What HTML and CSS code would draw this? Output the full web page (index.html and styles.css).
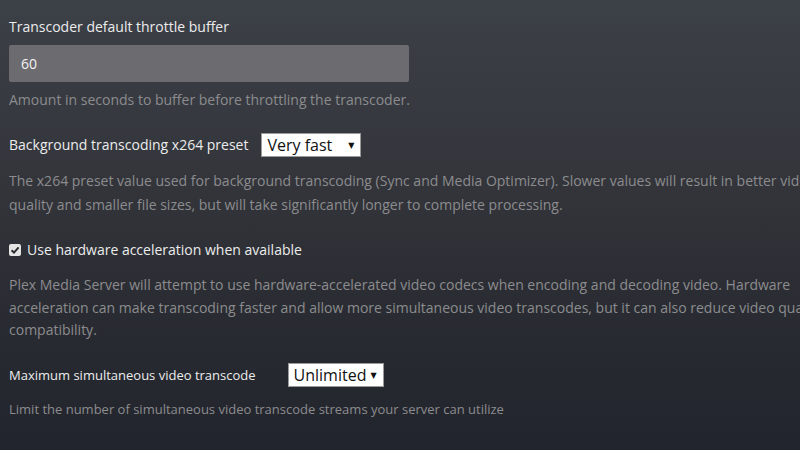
FILE: index.html
```html
<!DOCTYPE html>
<html lang="en">
<head>
    <meta charset="UTF-8">
    <meta name="viewport" content="width=device-width, initial-scale=1.0">
    <title>Transcoder Settings</title>
    <link rel="stylesheet" href="styles.css">
</head>
<body>

    <div id="settings">
        <div class="setting first">
            <label class="label" for="throttle-buffer">Transcoder default throttle buffer</label>
            <input id="throttle-buffer" class="text-input" type="text" value="60">
            <p class="help help-tight">Amount in seconds to buffer before throttling the transcoder.</p>
        </div>

        <div class="setting">
            <div class="row">
                <span class="label">Background transcoding x264 preset</span>
                <span class="select-box preset">Very fast</span>
            </div>
            <p class="help">The x264 preset value used for background transcoding (Sync and Media Optimizer). Slower values will result in better video quality and smaller file sizes, but will take significantly longer to complete processing.</p>
        </div>

        <div class="setting">
            <div class="row">
                <span class="check">
                    <svg width="12" height="12" viewBox="0 0 12 12">
                        <rect x="0" y="0" width="12" height="12" rx="2" fill="#e4e4e4"/>
                        <path d="M2.6 6.2 L5 8.6 L9.6 3.4" stroke="#2b2b2f" stroke-width="2" fill="none"/>
                    </svg>
                </span>
                <span class="label">Use hardware acceleration when available</span>
            </div>
            <p class="help help-wide">Plex Media Server will attempt to use hardware-accelerated video codecs when encoding and decoding video. Hardware acceleration can make transcoding faster and allow more simultaneous video transcodes, but it can also reduce video quality and compatibility.</p>
        </div>

        <div class="setting small">
            <div class="row">
                <span class="label">Maximum simultaneous video transcode</span>
                <span class="select-box limit">Unlimited</span>
            </div>
            <p class="help">Limit the number of simultaneous video transcode streams your server can utilize</p>
        </div>
    </div>

</body>
</html>
```

FILE: styles.css
```css
html, body { height: 100%; }
body {
    margin: 0;
    overflow: hidden;
    font-family: "Open Sans", "DejaVu Sans", sans-serif;
    background: linear-gradient(180deg, #3c4047 0%, #33353b 40%, #282a31 75%, #22252d 100%);
    color: #e8e8e8;
}
#settings { width: 848px; padding: 17px 0 0 9px; }
.setting { margin-bottom: 21px; }
.label { display: block; font-size: 14px; line-height: 20px; color: #ececec; }
.row { display: flex; align-items: center; height: 24px; }
.row .label { margin-right: 13px; }
.text-input {
    display: block;
    box-sizing: border-box;
    width: 400px;
    height: 37px;
    margin-top: 8px;
    padding: 0 12px;
    border: none;
    border-radius: 2px;
    background: #6b6b70;
    color: #f4f4f4;
    font-family: inherit;
    font-size: 14px;
}
.help { margin: 12px 0 0; font-size: 14px; line-height: 24px; color: #8c8c8e; }
.help-tight { margin-top: 6px; }
.help-wide { margin-top: 12px; line-height: 22.5px; }
.small .label { font-size: 13px; margin-right: 32px; }
.small .help { font-size: 13px; margin-top: 10px; }
.select-box {
    position: relative;
    display: inline-block;
    box-sizing: border-box;
    height: 24px;
    padding: 0 0 0 5px;
    border: 1px solid #9a9a9a;
    background: #fff;
    color: #111;
    font-size: 16px;
    line-height: 22px;
}
.select-box::after {
    content: "\25BC";
    position: absolute;
    right: 6px;
    top: 0;
    font-size: 8px;
    line-height: 22px;
}
.preset { width: 100px; }
.limit { width: 96px; }
.check { display: flex; width: 12px; height: 12px; margin-right: 6px; }
```
